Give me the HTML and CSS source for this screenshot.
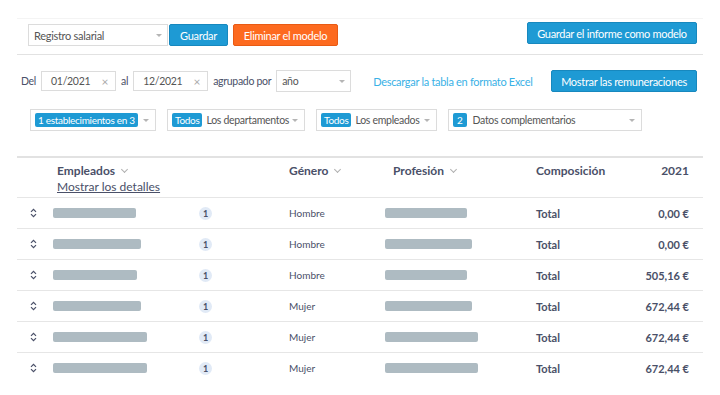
FILE: index.html
```html
<!DOCTYPE html>
<html lang="es">
<head>
    <meta charset="UTF-8">
    <meta name="viewport" content="width=device-width, initial-scale=1.0">
    <title>Registro salarial</title>
    <link rel="stylesheet" href="styles.css">
</head>
<body>
    <div class="page">
        <!-- Model toolbar -->
        <div class="toolbar">
            <div class="toolbar-left">
                <div class="select model-select">
                    <span>Registro salarial</span>
                    <span class="caret"></span>
                </div>
                <button class="btn btn-blue btn-attached">Guardar</button>
                <button class="btn btn-orange">Eliminar el modelo</button>
            </div>
            <button class="btn btn-blue btn-wide">Guardar el informe como modelo</button>
        </div>

        <!-- Period filters -->
        <div class="filters">
            <span class="label">Del</span>
            <div class="date-input"><span>01/2021</span><span class="clear">&times;</span></div>
            <span class="label">al</span>
            <div class="date-input"><span>12/2021</span><span class="clear">&times;</span></div>
            <span class="label">agrupado por</span>
            <div class="select group-select">
                <span>año</span>
                <span class="caret"></span>
            </div>
            <a class="excel-link" href="#">Descargar la tabla en formato Excel</a>
            <button class="btn btn-blue btn-show">Mostrar las remuneraciones</button>
        </div>

        <!-- Population filters -->
        <div class="multi-filters">
            <div class="select multi ms-estab">
                <span class="tag">1 establecimientos en 3</span>
                <span class="caret"></span>
            </div>
            <div class="select multi ms-dept">
                <span class="tag">Todos</span><span>Los departamentos</span>
                <span class="caret"></span>
            </div>
            <div class="select multi ms-emp">
                <span class="tag">Todos</span><span>Los empleados</span>
                <span class="caret"></span>
            </div>
            <div class="select multi ms-extra">
                <span class="tag">2</span><span>Datos complementarios</span>
                <span class="caret"></span>
            </div>
        </div>

        <!-- Salary table -->
        <table class="salary-table">
            <thead>
                <tr>
                    <th class="col-sort"></th>
                    <th class="col-emp">
                        <div>Empleados <span class="chev"></span></div>
                        <a class="details-link" href="#">Mostrar los detalles</a>
                    </th>
                    <th class="col-count"></th>
                    <th class="col-gender">Género <span class="chev"></span></th>
                    <th class="col-prof">Profesión <span class="chev"></span></th>
                    <th class="col-comp">Composición</th>
                    <th class="col-amount">2021</th>
                </tr>
            </thead>
            <tbody id="rows"></tbody>
        </table>
    </div>

    <script>
        const rows = [
            { emp: 83, prof: 82, gender: 'Hombre', amount: '0,00 €' },
            { emp: 88, prof: 87, gender: 'Hombre', amount: '0,00 €' },
            { emp: 84, prof: 82, gender: 'Hombre', amount: '505,16 €' },
            { emp: 88, prof: 87, gender: 'Mujer', amount: '672,44 €' },
            { emp: 94, prof: 93, gender: 'Mujer', amount: '672,44 €' },
            { emp: 94, prof: 93, gender: 'Mujer', amount: '672,44 €' }
        ];

        const sortIcon = `
            <svg width="7" height="10" viewBox="0 0 7 10">
                <path d="M1 3.8 L3.5 1.3 L6 3.8 M1 6.2 L3.5 8.7 L6 6.2" fill="none" stroke="#4a5068" stroke-width="1.2"/>
            </svg>`;

        document.getElementById('rows').innerHTML = rows.map(row => `
            <tr>
                <td class="col-sort">${sortIcon}</td>
                <td class="col-emp"><span class="blur-bar" style="width: ${row.emp}px"></span></td>
                <td class="col-count"><span class="count">1</span></td>
                <td class="col-gender">${row.gender}</td>
                <td class="col-prof"><span class="blur-bar" style="width: ${row.prof}px"></span></td>
                <td class="col-comp">Total</td>
                <td class="col-amount">${row.amount}</td>
            </tr>
        `).join('');
    </script>
</body>
</html>
```

FILE: styles.css
```css
body {
    font-family: Lato, "Liberation Sans", sans-serif;
    margin: 0;
    padding: 0;
    background: #fff;
    color: #4a5068;
    font-size: 11px;
    white-space: nowrap;
}
.page {
    margin: 18px 17px 0 17px;
    border-top: 1px solid #f4f4f4;
}
.toolbar {
    display: flex;
    justify-content: space-between;
    align-items: flex-start;
    padding: 3px 6px 8px 11px;
    border-bottom: 1px solid #e2e2e2;
}
.toolbar-left {
    display: flex;
    align-items: center;
    padding-top: 2px;
}
.btn {
    font-family: inherit;
    font-size: 11px;
    letter-spacing: -0.3px;
    color: #fff;
    border: none;
    border-radius: 2px;
    cursor: pointer;
    height: 22px;
    padding: 0;
    text-align: center;
}
.btn-blue {
    background: #1e9ad4;
    border: 1px solid #1788be;
}
.btn-orange {
    background: #fd6a1f;
    border: 1px solid #e85a14;
    margin-left: 5px;
    width: 105px;
}
.btn-attached {
    margin-left: 1px;
    width: 59px;
}
.btn-wide {
    width: 170px;
}
.select {
    display: flex;
    align-items: center;
    height: 21px;
    border: 1px solid #dcdcdc;
    background: #fff;
    padding: 0 5px;
    color: #555;
    box-sizing: border-box;
    font-size: 10.5px;
    letter-spacing: -0.3px;
}
.caret {
    margin-left: auto;
    width: 0;
    height: 0;
    border-left: 3px solid transparent;
    border-right: 3px solid transparent;
    border-top: 3px solid #b5b5b5;
}
.model-select {
    width: 140px;
    height: 22px;
    font-size: 11px;
}
.filters {
    display: flex;
    align-items: center;
    padding: 15px 6px 0 4px;
    font-size: 10.5px;
    letter-spacing: -0.3px;
}
.label {
    margin: 0 5px;
}
.label:first-child {
    margin-left: 0;
}
.date-input {
    display: flex;
    align-items: center;
    justify-content: space-between;
    width: 75px;
    height: 20px;
    box-sizing: border-box;
    border: 1px solid #dcdcdc;
    padding: 0 7px 0 9px;
    color: #555;
}
.clear {
    color: #aaa;
    font-size: 12px;
}
.group-select {
    width: 75px;
    height: 22px;
}
.excel-link {
    color: #39b1e6;
    text-decoration: none;
    margin-left: 22px;
    font-size: 11px;
    letter-spacing: -0.3px;
}
.btn-show {
    margin-left: auto;
    width: 146px;
}
.multi-filters {
    display: flex;
    align-items: center;
    gap: 11px;
    padding: 17px 0 0 13px;
}
.multi {
    height: 22px;
    padding: 0 6px 0 4px;
}
.tag {
    background: #1e9ad4;
    color: #fff;
    padding: 0 3px;
    border-radius: 2px;
    line-height: 14px;
    margin-right: 4px;
    font-size: 10px;
    letter-spacing: -0.3px;
}
.ms-estab { width: 126px; }
.ms-dept { width: 138px; }
.ms-emp { width: 121px; }
.ms-extra { width: 194px; }
.ms-extra .tag { padding: 0 4px; margin-right: 6px; }
.salary-table {
    width: 100%;
    border-collapse: collapse;
    margin-top: 25px;
    border-top: 2px solid #e2e2e2;
}
.salary-table th {
    font-weight: bold;
    text-align: left;
    vertical-align: top;
    padding: 5px 0 0 0;
    height: 34px;
    font-size: 12px;
}
.salary-table td {
    height: 30px;
    padding: 0;
    border-top: 1px solid #e6e6e6;
    font-size: 11px;
    vertical-align: middle;
}
.chev {
    display: inline-block;
    width: 4px;
    height: 4px;
    border-right: 1px solid #b0b0b0;
    border-bottom: 1px solid #b0b0b0;
    transform: rotate(45deg);
    margin: 0 0 3px 4px;
}
.details-link {
    color: #4a5068;
    font-weight: normal;
    display: block;
    margin-top: 1px;
}
.salary-table .col-sort { width: 23px; padding-left: 13px; }
.salary-table .col-emp { width: 137px; }
.salary-table th.col-emp { padding-left: 4px; width: 133px; }
.salary-table .col-count { width: 86px; padding-left: 9px; }
.salary-table .col-gender { width: 96px; padding-left: 4px; }
.salary-table td.col-gender { font-size: 10px; }
.salary-table .col-prof { width: 147px; }
.salary-table th.col-prof { padding-left: 8px; width: 139px; }
.salary-table .col-comp { font-weight: bold; padding-left: 4px; }
.salary-table .col-amount { text-align: right; font-weight: bold; padding-right: 14px; }
.blur-bar {
    display: block;
    height: 10px;
    border-radius: 2px;
    background: #aebbc2;
}
.count {
    display: inline-block;
    width: 13px;
    height: 13px;
    line-height: 13px;
    border-radius: 50%;
    background: #e1eaf6;
    text-align: center;
    font-size: 9px;
    font-weight: bold;
}
```
